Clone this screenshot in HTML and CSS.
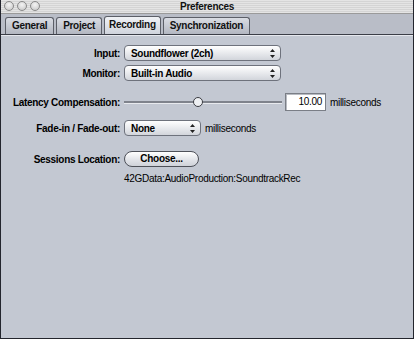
FILE: index.html
```html
<!DOCTYPE html>
<html>
<head>
<meta charset="utf-8">
<title>Preferences</title>
<link rel="stylesheet" href="styles.css">
</head>
<body>
<div class="window">
  <div class="titlebar">
    <div class="lights">
      <span class="light"></span><span class="light"></span><span class="light"></span>
    </div>
    <div class="title">Preferences</div>
  </div>

  <div class="tabbar">
    <div class="tab">General</div>
    <div class="tab">Project</div>
    <div class="tab selected">Recording</div>
    <div class="tab">Synchronization</div>
  </div>

  <div class="content">
    <div class="form">
      <div class="label">Input:</div>
      <div class="field">
        <div class="popup wide"><span>Soundflower (2ch)</span><svg class="arrows" width="5" height="9" viewBox="0 0 5 9"><path d="M2.5 0 L5 3 L0 3 Z M0 6 L5 6 L2.5 9 Z" fill="#222"/></svg></div>
      </div>

      <div class="label">Monitor:</div>
      <div class="field">
        <div class="popup wide"><span>Built-in Audio</span><svg class="arrows" width="5" height="9" viewBox="0 0 5 9"><path d="M2.5 0 L5 3 L0 3 Z M0 6 L5 6 L2.5 9 Z" fill="#222"/></svg></div>
      </div>

      <div class="label latency">Latency Compensation:</div>
      <div class="field latency">
        <div class="slider">
          <div class="track"></div>
          <div class="thumb" style="left: 43.5%"></div>
        </div>
        <div class="textbox">10.00</div>
        <span class="unit">milliseconds</span>
      </div>

      <div class="label fade">Fade-in / Fade-out:</div>
      <div class="field fade">
        <div class="popup short"><span>None</span><svg class="arrows" width="5" height="9" viewBox="0 0 5 9"><path d="M2.5 0 L5 3 L0 3 Z M0 6 L5 6 L2.5 9 Z" fill="#222"/></svg></div>
        <span class="unit">milliseconds</span>
      </div>

      <div class="label sessions">Sessions Location:</div>
      <div class="field sessions">
        <div class="button">Choose...</div>
      </div>

      <div></div>
      <div class="path">42GData:AudioProduction:SoundtrackRec</div>
    </div>
  </div>
</div>
</body>
</html>
```

FILE: styles.css
```css
html, body { margin: 0; padding: 0; }
body { width: 414px; height: 339px; background: #1f2029; font-family: "Liberation Sans", Arial, sans-serif; font-size: 10px; letter-spacing: -0.3px; color: #000; }

.window { box-sizing: border-box; width: 414px; height: 339px; border: 1px solid #23252d; border-top: 0; background: #c3c8d2; display: flex; flex-direction: column; overflow: hidden; }

.titlebar { height: 13px; position: relative; background: repeating-linear-gradient(to bottom, #e4e4e4 0px, #e4e4e4 1px, #d4d4d4 1px, #d4d4d4 2px); border-bottom: 1px solid #9a9a9a; display: flex; align-items: center; justify-content: center; }
.lights { position: absolute; left: 3px; top: 1px; display: flex; gap: 3px; }
.light { width: 8px; height: 8px; border-radius: 50%; border: 1px solid #8a8a8a; background: radial-gradient(circle at 50% 35%, #f4f4f4, #c4c4c4); }
.title { font-weight: bold; font-size: 10px; color: #111; }

.tabbar { height: 20px; background: #b9bdc7; display: flex; align-items: flex-end; padding-left: 4px; gap: 2px; border-bottom: 1px solid #3b3e47; }
.tab { height: 16px; line-height: 16px; padding: 0 6px; font-weight: bold; font-size: 10px; border: 1px solid #5c5f68; border-bottom: 0; border-radius: 3px 3px 0 0; background: linear-gradient(#d9dce3, #b3b7c1); color: #111; }
.tab.selected { background: linear-gradient(#f0f2f6, #d0d4dc); height: 17px; padding: 0 4px; }

.content { flex: 1; border-top: 1px solid #e6e8ee; padding-top: 9px; }

.form { display: grid; grid-template-columns: 119px auto; column-gap: 4px; row-gap: 4px; align-items: center; }
.label { font-weight: bold; text-align: right; }
.field { display: flex; align-items: center; gap: 3px; height: 16px; }
.label.latency { margin-top: 8px; }
.field.latency { margin-top: 8px; height: 18px; }
.label.fade, .field.fade { margin-top: 5px; }
.label.sessions, .field.sessions { margin-top: 11px; }

.popup { box-sizing: border-box; height: 16px; border: 1px solid #6e727c; border-radius: 4px; background: linear-gradient(#ffffff, #e4e6ea 60%, #d2d5db); display: flex; align-items: center; justify-content: space-between; padding: 0 5px 0 6px; font-weight: bold; }
.popup.wide { width: 157px; }
.popup.short { width: 77px; }

.slider { position: relative; width: 158px; height: 14px; }
.track { position: absolute; left: 0; right: 0; top: 6px; height: 2px; background: #7f838c; border-bottom: 1px solid #e8eaee; }
.thumb { position: absolute; top: 2px; width: 8px; height: 8px; border: 1.5px solid #3a3c42; border-radius: 50%; background: #eef0f3; }

.textbox { box-sizing: border-box; width: 41px; height: 18px; border: 1px solid #7a7e86; box-shadow: inset 1px 1px 0 #b8bbc2; background: #fff; text-align: right; padding: 2px 3px 0 0; font-size: 10px; }
.unit { padding-left: 1px; }

.button { box-sizing: border-box; width: 75px; height: 16px; border: 1px solid #4e5159; border-radius: 8px; background: linear-gradient(#ffffff, #e2e4e9 55%, #cfd2d9); text-align: center; line-height: 14px; font-weight: bold; }

.path { margin-top: 2px; }
```
